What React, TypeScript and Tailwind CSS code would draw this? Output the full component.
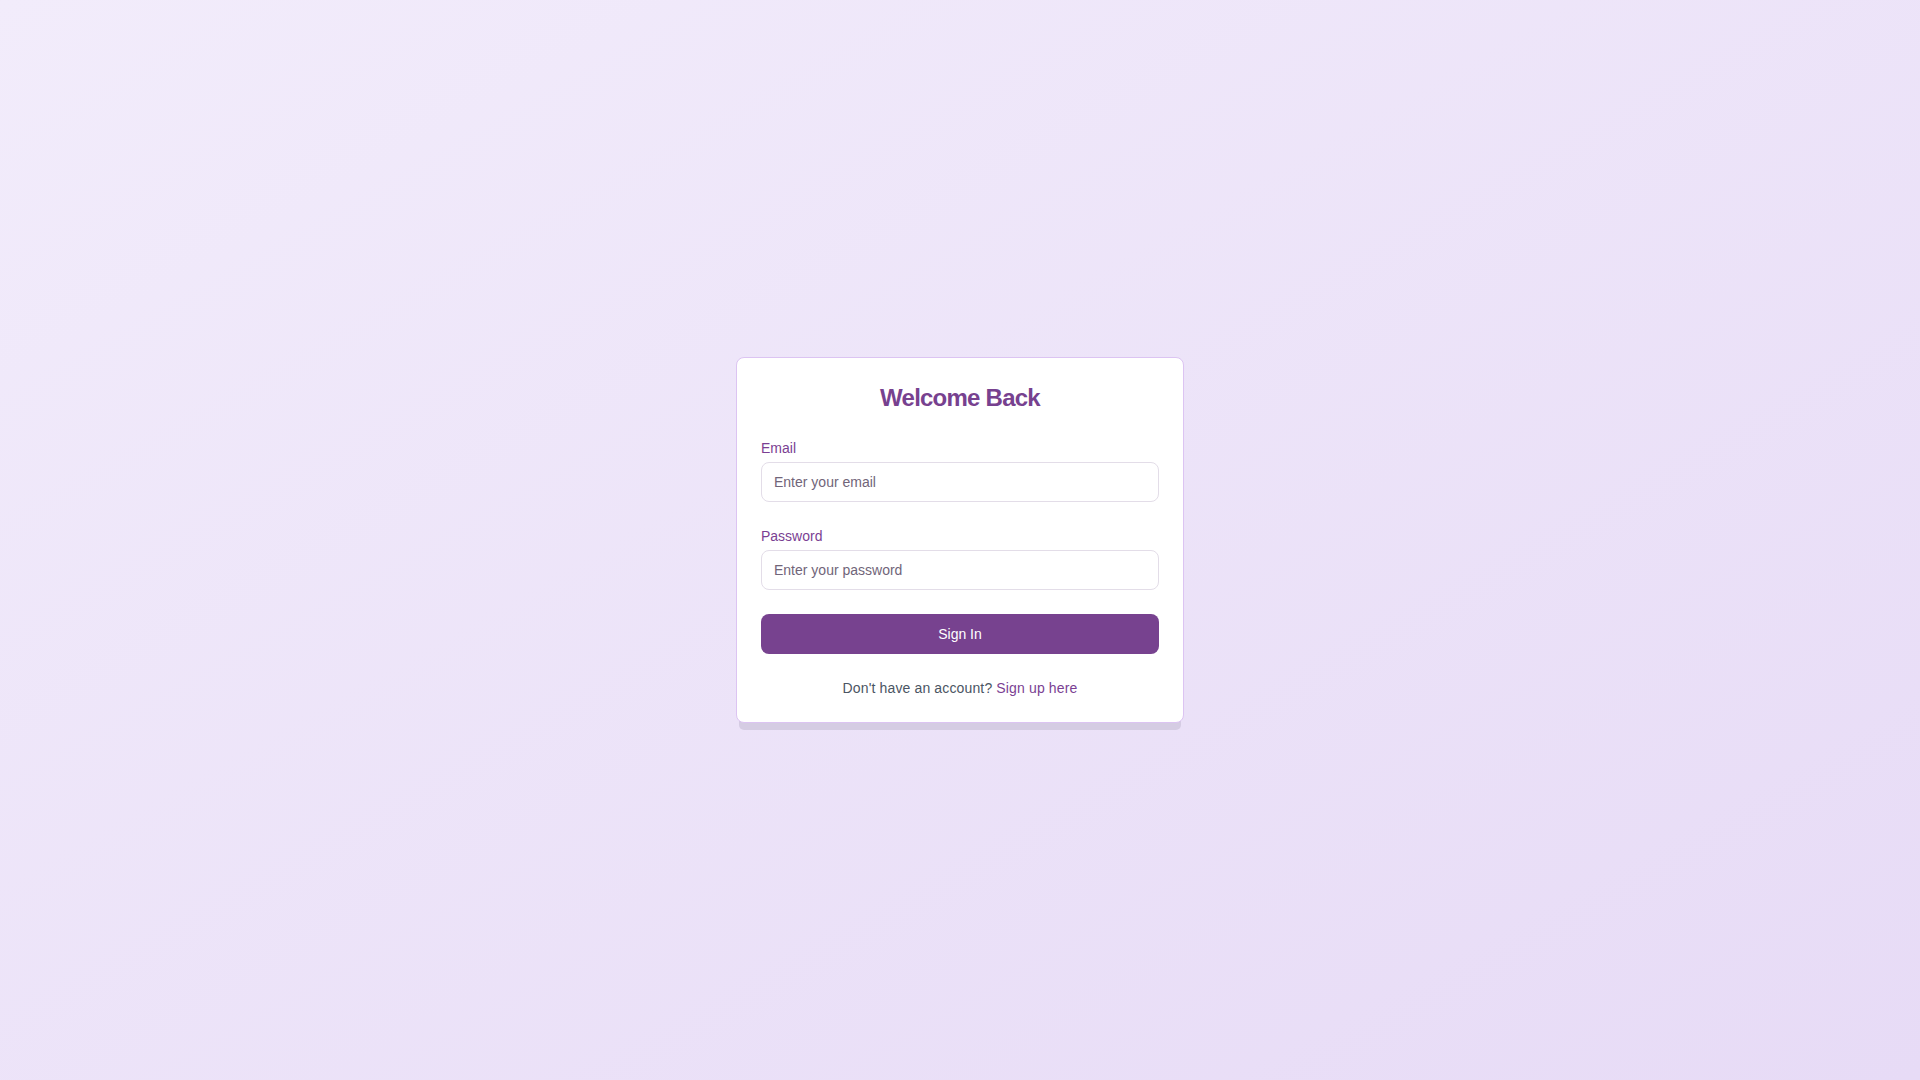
export default function App() {
  return (
    <div className="min-h-screen w-full flex items-center justify-center bg-gradient-to-br from-[#f2ecfb] to-[#e7dbf6] font-['Liberation_Sans',Arial,sans-serif]">
      <div className="w-[448px] bg-white border border-[#dcc4f2] rounded-lg p-6 shadow-[0_10px_0_-3px_#d5cce3]">
        <h1 className="text-2xl font-bold tracking-[-0.032em] text-center text-[#77418f] mb-6">Welcome Back</h1>
        <form className="flex flex-col gap-6" onSubmit={(e) => e.preventDefault()}>
          <div>
            <label className="block text-sm text-[#7b3f93] mb-1">Email</label>
            <input
              type="email"
              placeholder="Enter your email"
              className="w-full h-10 px-3 text-sm rounded-lg border border-[#e3dde8] outline-none placeholder:text-[#716579]"
            />
          </div>
          <div>
            <label className="block text-sm text-[#7b3f93] mb-1">Password</label>
            <input
              type="password"
              placeholder="Enter your password"
              className="w-full h-10 px-3 text-sm rounded-lg border border-[#e3dde8] outline-none placeholder:text-[#716579]"
            />
          </div>
          <button type="submit" className="w-full h-10 rounded-lg bg-[#77428f] text-white text-sm">
            Sign In
          </button>
        </form>
        <p className="mt-6 text-sm text-center text-[#4b5563] tracking-[0.01em]">
          Don't have an account? <a href="#" className="text-[#7b3f93]">Sign up here</a>
        </p>
      </div>
    </div>
  );
}
